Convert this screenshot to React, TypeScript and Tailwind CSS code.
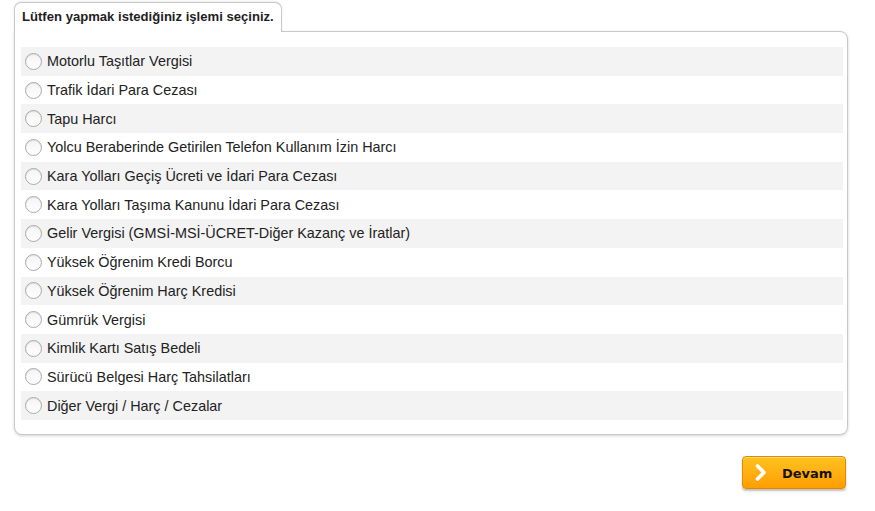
const items = [
  'Motorlu Taşıtlar Vergisi',
  'Trafik İdari Para Cezası',
  'Tapu Harcı',
  'Yolcu Beraberinde Getirilen Telefon Kullanım İzin Harcı',
  'Kara Yolları Geçiş Ücreti ve İdari Para Cezası',
  'Kara Yolları Taşıma Kanunu İdari Para Cezası',
  'Gelir Vergisi (GMSİ-MSİ-ÜCRET-Diğer Kazanç ve İratlar)',
  'Yüksek Öğrenim Kredi Borcu',
  'Yüksek Öğrenim Harç Kredisi',
  'Gümrük Vergisi',
  'Kimlik Kartı Satış Bedeli',
  'Sürücü Belgesi Harç Tahsilatları',
  'Diğer Vergi / Harç / Cezalar',
]

function Radio() {
  return (
    <span className="inline-block h-[17px] w-[17px] shrink-0 rounded-full border border-[#a9a9a9] bg-gradient-to-b from-[#f4f4f4] to-white shadow-[inset_0_1px_1px_rgba(0,0,0,0.08)]" />
  )
}

export default function App() {
  return (
    <div className="min-h-[511px] bg-white pl-[14px] pr-[27px] pt-[2px] font-['Liberation_Sans',Arial,sans-serif]">
      {/* tab */}
      <div className="relative z-10 -mb-px flex h-[30px] w-fit items-center rounded-t-[7px] border border-b-0 border-[#c9c9c9] bg-white px-[7px] pb-[2px] shadow-[0_-1px_2px_rgba(0,0,0,0.08)]">
        <span className="text-[13.1px] font-bold leading-[15px] text-[#1e1e1e]">Lütfen yapmak istediğiniz işlemi seçiniz.</span>
      </div>

      {/* panel */}
      <div className="rounded-b-[8px] rounded-tr-[8px] border border-[#c9c9c9] bg-white pb-[14px] pl-[6px] pr-[4px] pt-[15px] shadow-[0_1px_3px_rgba(0,0,0,0.18)]">
        {items.map((label, i) => (
          <label
            key={label}
            className={`flex h-[28.7px] cursor-pointer items-center gap-[5px] pl-[4px] ${i % 2 === 0 ? 'bg-[#f3f3f3]' : 'bg-white'}`}
          >
            <Radio />
            <span className="text-[14.4px] leading-[16px] text-[#222]">{label}</span>
          </label>
        ))}
      </div>

      {/* actions */}
      <div className="mt-[21px] flex justify-end pr-[2px]">
        <button className="flex h-[33px] w-[104px] items-center rounded-[4px] border border-[#e08a00] bg-gradient-to-b from-[#ffc21f] to-[#ff9d00] pl-[12px] shadow-[0_2px_2px_rgba(0,0,0,0.25),inset_0_1px_0_rgba(255,255,255,0.4)]">
          <svg width="12" height="17" viewBox="0 0 12 17" className="shrink-0">
            <path d="M2.5 2 L9 8.5 L2.5 15" fill="none" stroke="#fff" strokeWidth="3.6" strokeLinecap="round" strokeLinejoin="round" />
          </svg>
          <span className="ml-[15px] mt-[3px] font-['DejaVu_Sans',Verdana,sans-serif] text-[13px] font-bold text-[#1a1200]">Devam</span>
        </button>
      </div>
    </div>
  )
}
